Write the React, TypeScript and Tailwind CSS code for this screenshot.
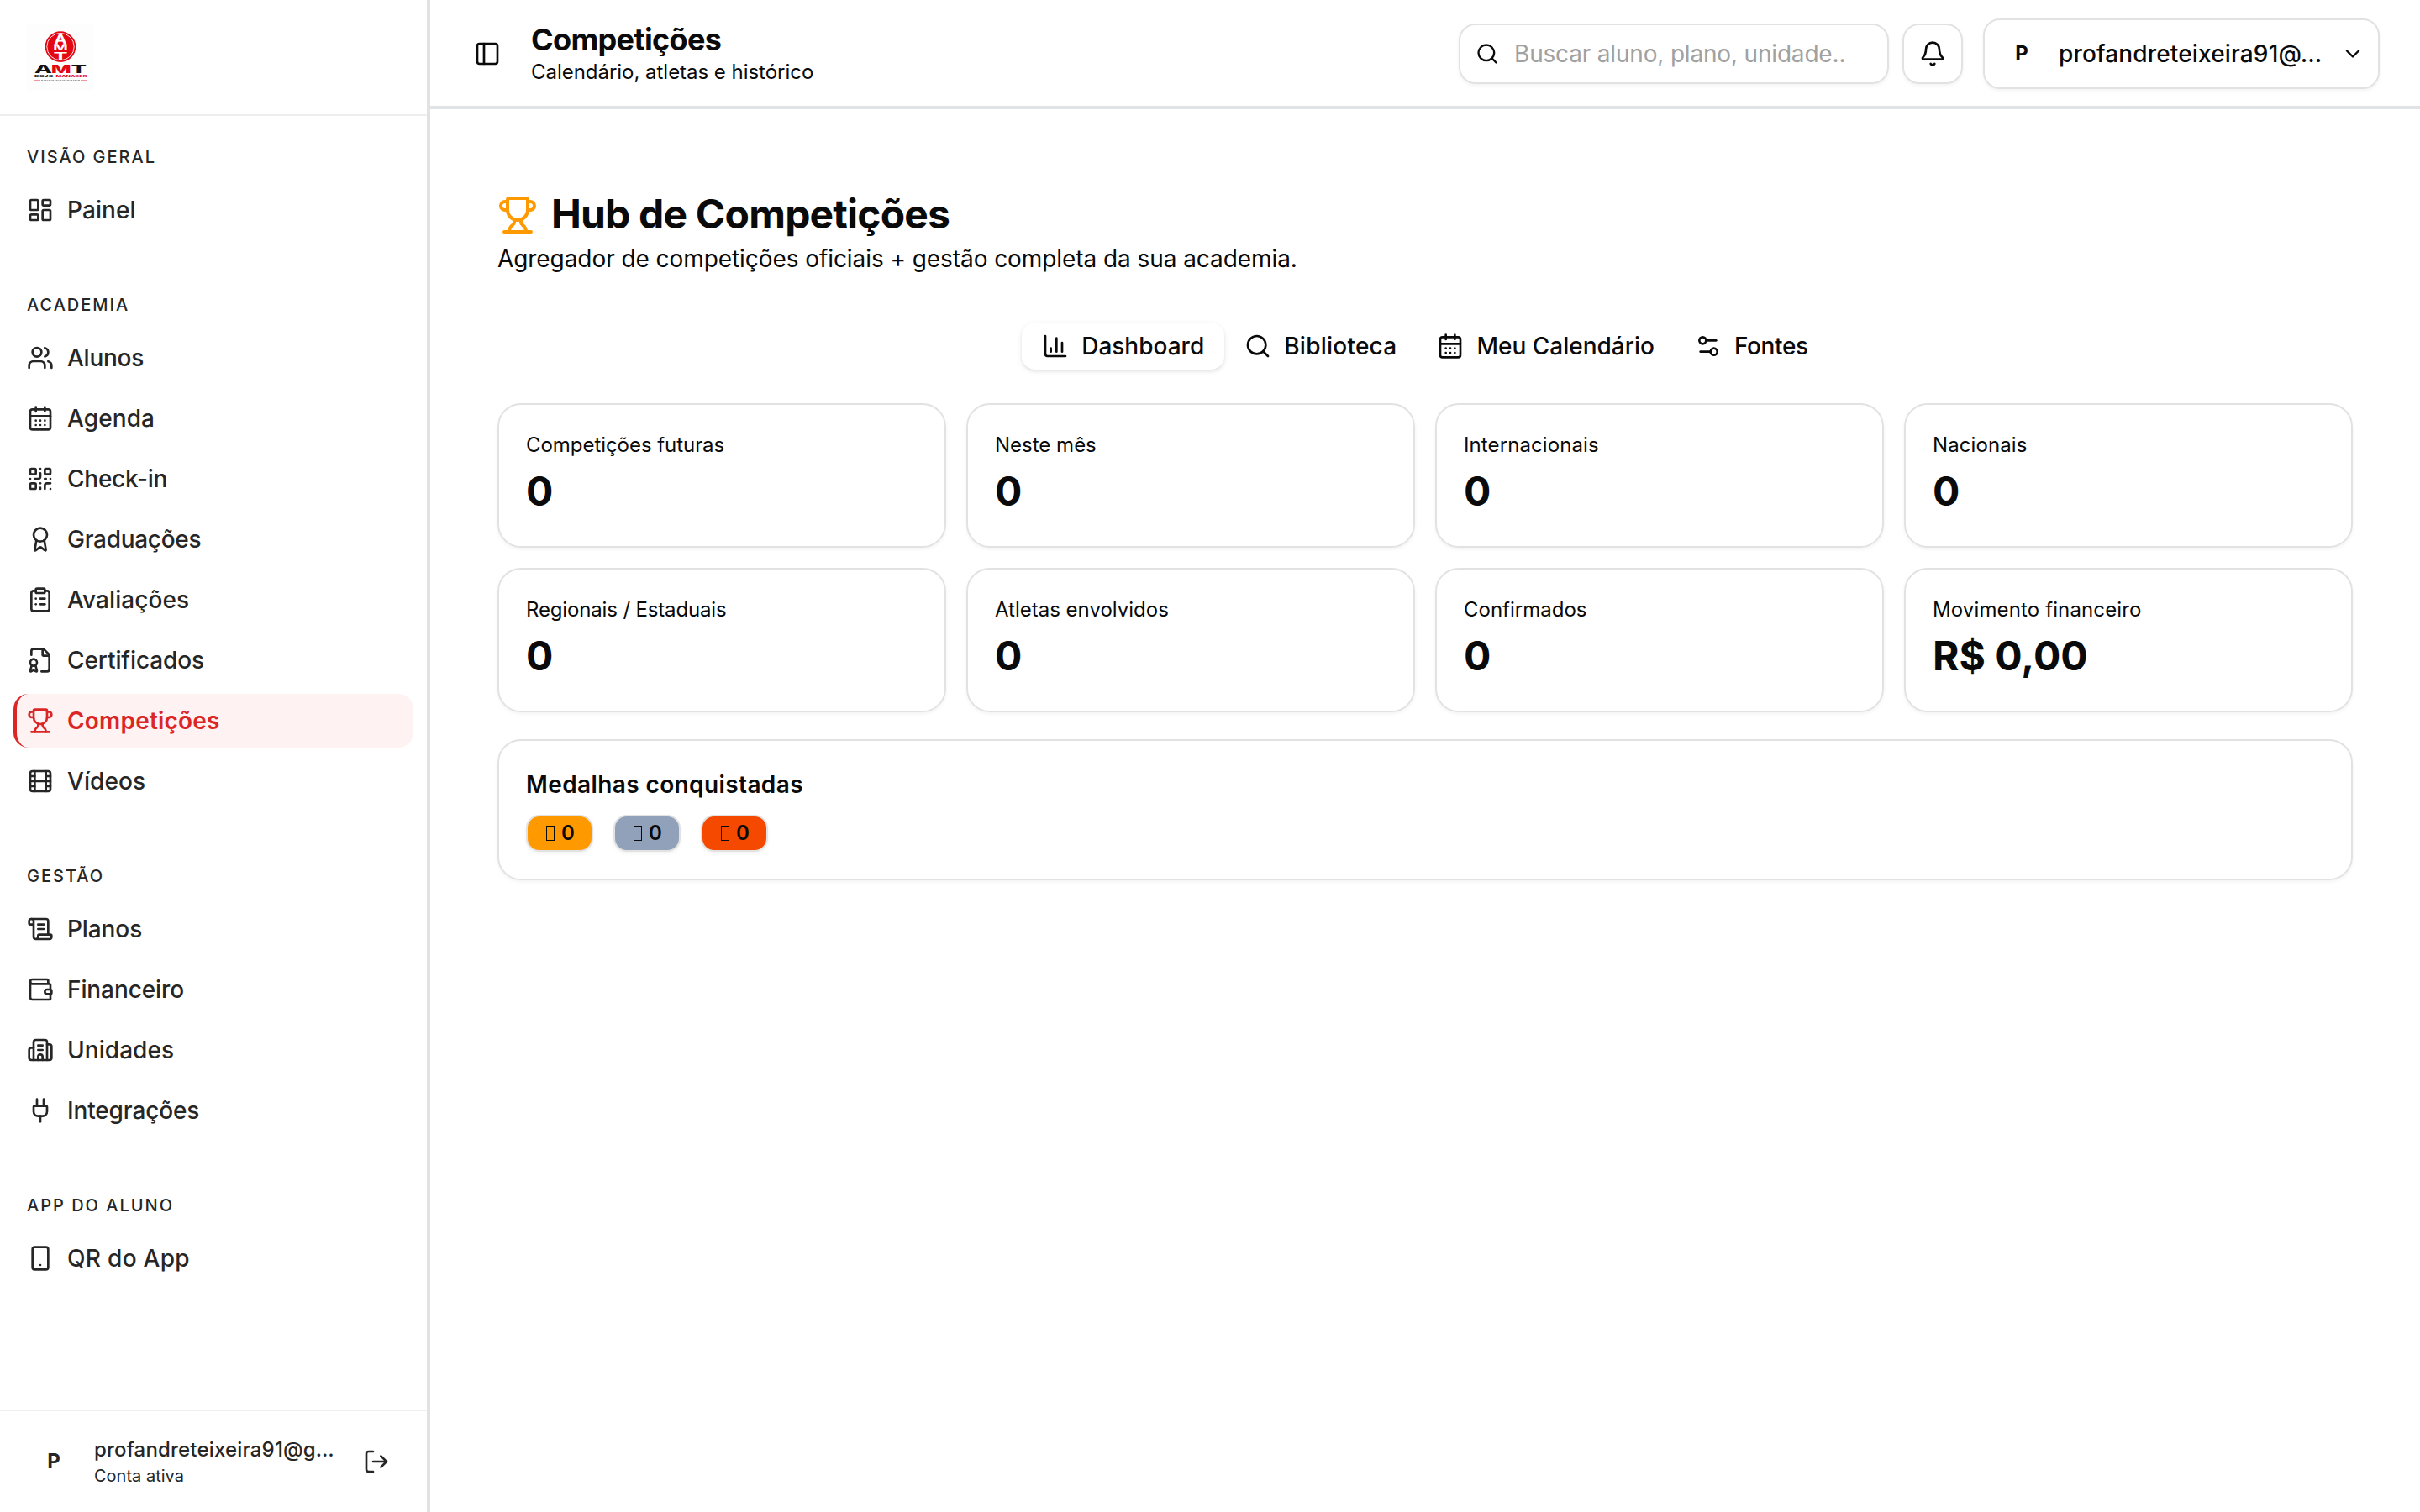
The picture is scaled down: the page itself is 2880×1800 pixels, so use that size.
import {
  LayoutDashboard, Users, CalendarDays, QrCode, Award, ClipboardList, FileBadge, Trophy, Film,
  ScrollText, Wallet, Building2, Plug, Smartphone, LogOut, PanelLeft, Search, Bell, ChevronDown,
  ChartColumn, Settings2, type LucideIcon,
} from "lucide-react";

type Item = { label: string; icon: LucideIcon; active?: boolean; track?: string };

const groups: { title: string; items: Item[] }[] = [
  { title: "Visão geral", items: [{ label: "Painel", icon: LayoutDashboard, track: "tracking-[0.08px]" }] },
  {
    title: "Academia",
    items: [
      { label: "Alunos", icon: Users, track: "tracking-[-0.25px]" },
      { label: "Agenda", icon: CalendarDays, track: "tracking-[0.1px]" },
      { label: "Check-in", icon: QrCode, track: "tracking-[-0.25px]" },
      { label: "Graduações", icon: Award, track: "tracking-[-0.3px]" },
      { label: "Avaliações", icon: ClipboardList, track: "tracking-[0.08px]" },
      { label: "Certificados", icon: FileBadge, track: "tracking-[-0.1px]" },
      { label: "Competições", icon: Trophy, active: true, track: "tracking-[0.2px]" },
      { label: "Vídeos", icon: Film, track: "tracking-[0.1px]" },
    ],
  },
  {
    title: "Gestão",
    items: [
      { label: "Planos", icon: ScrollText, track: "tracking-[-0.1px]" },
      { label: "Financeiro", icon: Wallet, track: "tracking-[-0.1px]" },
      { label: "Unidades", icon: Building2, track: "tracking-[0.05px]" },
      { label: "Integrações", icon: Plug, track: "tracking-[-0.14px]" },
    ],
  },
  { title: "App do aluno", items: [{ label: "QR do App", icon: Smartphone, track: "tracking-[0.3px]" }] },
];

const stats = [
  { label: "Competições futuras", value: "0", track: "tracking-[-0.05px]" },
  { label: "Neste mês", value: "0", track: "tracking-normal" },
  { label: "Internacionais", value: "0", track: "tracking-[0.1px]" },
  { label: "Nacionais", value: "0", track: "tracking-[0.1px]" },
  { label: "Regionais / Estaduais", value: "0", track: "tracking-[-0.15px]" },
  { label: "Atletas envolvidos", value: "0", track: "tracking-normal" },
  { label: "Confirmados", value: "0", track: "tracking-normal" },
  { label: "Movimento financeiro", value: "R$ 0,00", track: "tracking-[0.13px]" },
];

const tabs: Item[] = [
  { label: "Dashboard", icon: ChartColumn, active: true, track: "tracking-normal" },
  { label: "Biblioteca", icon: Search, track: "tracking-[0.24px]" },
  { label: "Meu Calendário", icon: CalendarDays, track: "tracking-normal" },
  { label: "Fontes", icon: Settings2, track: "tracking-[-0.35px]" },
];

const medals = ["bg-[#fe9a00]", "bg-[#90a1b9]", "bg-[#f54900]"];

function Logo() {
  return (
    <svg
      viewBox="0 0 80 80"
      className="size-20 bg-[#fdfdfd]"
      fontFamily="Inter, sans-serif"
      fontWeight="800"
      textRendering="geometricPrecision"
    >
      <circle cx="40" cy="27.6" r="18.3" fill="#e30613" />
      <circle cx="40" cy="27.6" r="16.2" fill="none" stroke="#fff" strokeWidth="0.9" />
      <g fill="#fff" textAnchor="middle" fontWeight="700">
        <text x="40" y="23.8" fontSize="15" textLength="15" lengthAdjust="spacingAndGlyphs">A</text>
        <text x="40" y="32.4" fontSize="10.5" textLength="17.5" lengthAdjust="spacingAndGlyphs">M</text>
        <text x="40" y="42.6" fontSize="12.5" textLength="17" lengthAdjust="spacingAndGlyphs">T</text>
      </g>
      <g fontSize="13.8">
        <text x="9" y="59" fill="#111" textLength="21" lengthAdjust="spacingAndGlyphs">A</text>
        <text x="28.8" y="59" fill="#e30613" textLength="24" lengthAdjust="spacingAndGlyphs">M</text>
        <text x="52.6" y="59" fill="#111" textLength="18.5" lengthAdjust="spacingAndGlyphs">T</text>
      </g>
      <text x="9" y="64" fontSize="4.2" fill="#111" textLength="22.5" lengthAdjust="spacingAndGlyphs">DOJO</text>
      <text x="34.5" y="64" fontSize="4.2" fill="#e30613" textLength="36.8" lengthAdjust="spacingAndGlyphs">MANAGER</text>
      <path d="M9 67.5h7M64 67.5h7" stroke="#e30613" strokeWidth="0.6" opacity="0.7" />
      <path d="M17 67.5h46" stroke="#555" strokeWidth="0.9" strokeDasharray="2 0.8 1 0.6" opacity="0.6" />
    </svg>
  );
}

function Sidebar() {
  return (
    <aside className="flex w-[512px] shrink-0 flex-col border-r-4 border-[#e2e2e2] text-[#262626]">
      <div className="border-b-2 border-[#eeeeee] px-8 py-7"><Logo /></div>
      <nav className="flex flex-1 flex-col gap-12 p-4">
        {groups.map((g) => (
          <section key={g.title}>
            <h2 className="flex h-16 items-center px-4 pt-[2px] text-[20px] font-medium tracking-[2px] uppercase">{g.title}</h2>
            <ul className="flex flex-col gap-2">
              {g.items.map(({ label, icon: Icon, active, track }) => (
                <li
                  key={label}
                  className={
                    active
                      ? "flex h-16 items-center gap-4 rounded-[18px] border-l-4 border-[#dc2626] bg-[#fef2f2] pl-3 text-[28px] font-semibold text-[#dc2626]"
                      : "flex h-16 items-center gap-4 px-4 text-[28px] font-medium"
                  }
                >
                  <Icon className="size-8" />
                  <span className={track}>{label}</span>
                </li>
              ))}
            </ul>
          </section>
        ))}
      </nav>
      <div className="flex h-[122px] items-center border-t-2 border-[#eeeeee] px-8">
        <span className="flex size-16 items-center justify-center text-[24px] font-bold">P</span>
        <div className="ml-4 flex w-[288px] flex-col pt-[2px] whitespace-nowrap">
          <span className="text-[24px] leading-[32px] font-medium tracking-[0.18px]">profandreteixeira91@g…</span>
          <span className="text-[20px] leading-[30px]">Conta ativa</span>
        </div>
        <LogOut className="ml-8 size-8" />
      </div>
    </aside>
  );
}

function Header() {
  return (
    <header className="flex h-[130px] shrink-0 items-center border-b-4 border-[#e1e4e6] pt-[2px] pr-12 pl-10">
      <span className="flex size-14 items-center justify-center"><PanelLeft className="size-8" /></span>
      <div className="ml-6 flex flex-1 flex-col pb-[2px]">
        <h1 className="text-[36px] leading-[45px] font-bold tracking-[-0.66px]">Competições</h1>
        <p className="text-[24px] leading-[32px] tracking-[-0.03px]">Calendário, atletas e histórico</p>
      </div>
      <div className="flex h-[72px] w-[512px] items-center rounded-[20px] border-2 border-[#e2e2e2] pl-[18px] shadow-[0_2px_4px_rgba(0,0,0,0.05)]">
        <Search className="size-7" />
        <span className="ml-[18px] text-[28px] tracking-[-0.18px] text-[#a1a1a1]">Buscar aluno, plano, unidade..</span>
      </div>
      <div className="ml-4 flex size-[72px] items-center justify-center rounded-[20px] border-2 border-[#e2e2e2] shadow-[0_2px_4px_rgba(0,0,0,0.05)]">
        <Bell className="size-8" />
      </div>
      <div className="ml-6 flex h-[84px] w-[472px] items-center rounded-[20px] border-2 border-[#e2e2e2] pl-3 shadow-[0_2px_4px_rgba(0,0,0,0.05)]">
        <span className="flex size-16 items-center justify-center text-[24px] font-bold">P</span>
        <span className="ml-3 w-[320px] text-[28px] font-medium tracking-[0.15px] whitespace-nowrap">profandreteixeira91@…</span>
        <ChevronDown className="ml-4 size-7" />
      </div>
    </header>
  );
}

export default function App() {
  return (
    <div className="flex h-[1800px] w-[2880px] overflow-hidden bg-white font-[Inter,sans-serif] text-[#0a0a0a]">
      <Sidebar />
      <div className="flex min-w-0 flex-1 flex-col">
        <Header />
        <main className="px-20 pt-[94px]">
          <h2 className="flex h-16 items-center gap-4 text-[48px] leading-[64px] font-bold tracking-[-0.82px]">
            <Trophy className="size-12 text-[#fe9a00]" />
            <span className="pb-[2px]">Hub de Competições</span>
          </h2>
          <p className="text-[28px] leading-[40px] tracking-[-0.07px]">Agregador de competições oficiais + gestão completa da sua academia.</p>
          <div className="mt-[52px] mb-9 flex h-[64px] items-center justify-center">
            {tabs.map(({ label, icon: Icon, active, track }) => (
              <div
                key={label}
                className={
                  active
                    ? "flex h-14 items-center gap-[15px] rounded-[16px] px-6 text-[28px] font-medium shadow-[0_2px_6px_rgba(0,0,0,0.1),0_2px_4px_-2px_rgba(0,0,0,0.1)]"
                    : "flex h-14 items-center gap-[15px] px-6 text-[28px] font-medium"
                }
              >
                <Icon className="size-8" />
                <span className={track}>{label}</span>
              </div>
            ))}
          </div>
          <div className="grid grid-cols-4 gap-6">
            {stats.map(({ label, value, track }) => (
              <div key={label} className="h-[172px] rounded-[28px] border-2 border-[#e2e2e2] px-8 pt-8 shadow-[0_2px_4px_rgba(0,0,0,0.05)]">
                <div className="text-[24px] leading-[32px]"><span className={track}>{label}</span></div>
                <div className="mt-[7px] text-[48px] leading-[64px] font-bold">{value}</div>
              </div>
            ))}
          </div>
          <section className="mt-8 h-[168px] rounded-[28px] border-2 border-[#e2e2e2] px-8 pt-8 shadow-[0_2px_4px_rgba(0,0,0,0.05)]">
            <h3 className="text-[28px] leading-[40px] font-semibold tracking-[0.39px]">Medalhas conquistadas</h3>
            <div className="mt-4 flex gap-6">
              {medals.map((color) => (
                <div key={color} className={`flex h-11 w-20 items-center rounded-[16px] border-2 border-[#e2e2e2] pl-[22px] text-[24px] leading-[32px] font-semibold shadow-[0_2px_4px_rgba(0,0,0,0.05)] ${color}`}>
                  <span className="mr-2 h-[18px] w-[10px] border border-[#0a0a0a]" />
                  <span>0</span>
                </div>
              ))}
            </div>
          </section>
        </main>
      </div>
    </div>
  );
}
